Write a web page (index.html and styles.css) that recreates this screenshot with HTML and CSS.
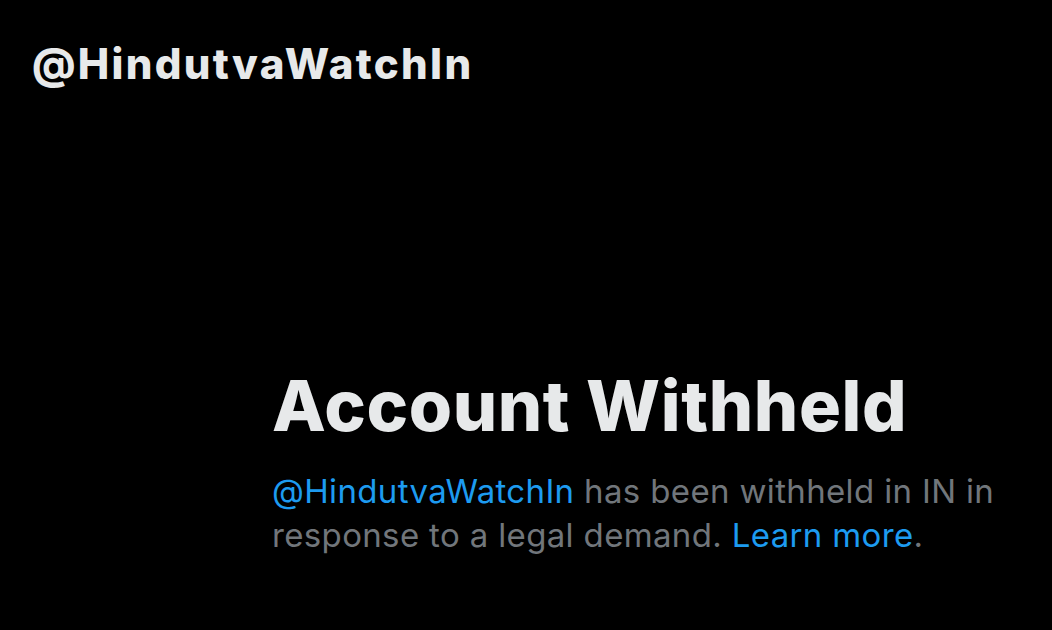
FILE: index.html
```html
<!DOCTYPE html>
<html lang="en">
<head>
<meta charset="utf-8">
<title>Account Withheld</title>
<link rel="stylesheet" href="styles.css">
</head>
<body>
<div class="page">
  <header class="top">
    <h2 class="handle">@HindutvaWatchIn</h2>
  </header>
  <main class="notice">
    <h1 class="title">Account Withheld</h1>
    <p class="desc"><span class="link">@HindutvaWatchIn</span> has been withheld in IN in response to a legal demand. <span class="link">Learn more</span>.</p>
  </main>
</div>
</body>
</html>
```
FILE: styles.css
```css
html, body {
  margin: 0;
  padding: 0;
  background: #000;
}
.page {
  width: 1052px;
  height: 630px;
  overflow: hidden;
  background: #000;
  font-family: Inter, "Liberation Sans", Arial, sans-serif;
}
.top {
  padding: 40px 0 0 32px;
}
.handle {
  margin: 0;
  font-size: 42px;
  font-weight: 800;
  letter-spacing: 2.3px;
  color: #e7e9ea;
  line-height: 48px;
}
.notice {
  padding: 278px 0 0 272px;
  width: 740px;
}
.title {
  margin: 0;
  font-size: 70px;
  font-weight: 800;
  letter-spacing: 0.6px;
  color: #e7e9ea;
  line-height: 80px;
}
.desc {
  margin: 23px 0 0;
  font-size: 33px;
  letter-spacing: 0.35px;
  line-height: 44px;
  color: #71767b;
}
.link {
  color: #1d9bf0;
}
```
